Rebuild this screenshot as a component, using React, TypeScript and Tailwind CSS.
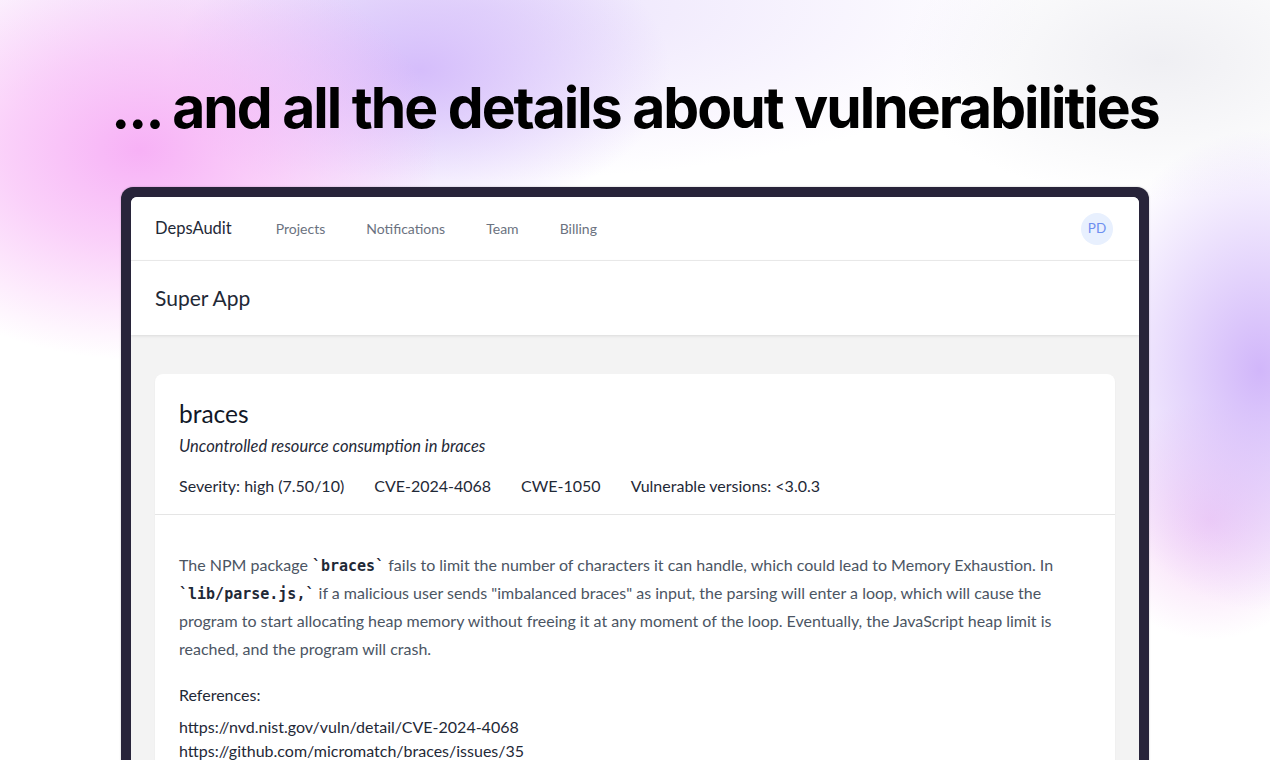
const SANS = { fontFamily: "Lato, 'Noto Sans', sans-serif" };
const MONO = { fontFamily: "'DejaVu Sans Mono', 'Liberation Mono', monospace" };

const NAV = ["Projects", "Notifications", "Team", "Billing"];

const META = [
	"Severity: high (7.50/10)",
	"CVE-2024-4068",
	"CWE-1050",
	"Vulnerable versions: <3.0.3",
];

const REFERENCES = [
	"https://nvd.nist.gov/vuln/detail/CVE-2024-4068",
	"https://github.com/micromatch/braces/issues/35",
];

function Code({ children }: { children: string }) {
	return (
		<code className="font-bold text-[15px] leading-none text-[#1f2937]" style={MONO}>
			{children}
		</code>
	);
}

export default function App() {
	return (
		<div className="flex h-[760px] w-full flex-col items-center overflow-hidden bg-white bg-[radial-gradient(ellipse_300px_210px_at_140px_150px,#f7b1f6_0%,rgba(247,177,246,0.6)_45%,rgba(255,255,255,0)_100%),radial-gradient(ellipse_250px_150px_at_420px_70px,#d5bdfb_0%,rgba(213,189,251,0.5)_50%,rgba(255,255,255,0)_100%),radial-gradient(ellipse_560px_170px_at_480px_10px,#ebe2fc_0%,rgba(235,226,252,0)_100%),radial-gradient(ellipse_180px_240px_at_1260px_370px,#d1b6fa_0%,rgba(209,182,250,0.5)_50%,rgba(255,255,255,0)_100%),radial-gradient(ellipse_120px_120px_at_1210px_520px,#f6d3f6_0%,rgba(246,211,246,0)_100%),radial-gradient(ellipse_260px_140px_at_1160px_60px,#efeff3_0%,rgba(239,239,243,0)_100%)]">
			<h1
				className="mt-[74px] text-[57px] font-bold leading-[68px] tracking-[-0.035em] text-black"
				style={{ fontFamily: "Inter, 'Noto Sans', sans-serif" }}
			>
				... and all the details about vulnerabilities
			</h1>

			<div className="mt-[45px] w-[1028px] flex-1 rounded-t-[12px] bg-[#28243a] px-[10px] pt-[10px] shadow-[0_0_2px_rgba(0,0,0,0.25)]">
				<div className="h-full overflow-hidden rounded-t-[6px] bg-[#f3f3f3]" style={SANS}>
					<nav className="flex h-[64px] items-center border-b border-[#ececec] bg-white px-6">
						<span className="text-[16.5px] text-[#1f2937]">DepsAudit</span>
						<div className="ml-[44px] flex gap-[41px]">
							{NAV.map((item) => (
								<span key={item} className="text-[14px] text-[#6b7280]">
									{item}
								</span>
							))}
						</div>
						<div className="ml-auto mr-[2px] flex h-8 w-8 items-center justify-center rounded-full bg-[#e8f0fe] text-[13.5px] text-[#6e8ff0]">
							PD
						</div>
					</nav>

					<header className="flex h-[74px] items-center bg-white px-6 shadow-[0_1px_3px_rgba(0,0,0,0.1)]">
						<h2 className="text-[21px] text-[#1f2937]">Super App</h2>
					</header>

					<main className="px-6 pt-[39px]">
						<section className="rounded-[8px] bg-white shadow-[0_1px_2px_rgba(0,0,0,0.05)]">
							<div className="border-b border-[#e5e5e5] px-6 pt-6 pb-4">
								<p className="text-[24.5px] leading-[32px] text-[#111827]">braces</p>
								<p className="mt-1 text-[16.5px] italic leading-[24px] text-[#1f2937]">
									Uncontrolled resource consumption in braces
								</p>
								<div className="mt-4 flex gap-[30px] text-[16px] leading-[24px] text-[#1f2937]">
									{META.map((item) => (
										<span key={item}>{item}</span>
									))}
								</div>
							</div>

							<div className="px-6 pt-[36px] pb-6">
								<p className="text-[16px] leading-[28px] text-[#4b5563]">
									The NPM package <Code>`braces`</Code> fails to limit the number of
									characters it can handle, which could lead to Memory Exhaustion. In{" "}
									<Code>`lib/parse.js,`</Code> if a malicious user sends "imbalanced
									braces" as input, the parsing will enter a loop, which will cause the
									program to start allocating heap memory without freeing it at any
									moment of the loop. Eventually, the JavaScript heap limit is reached,
									and the program will crash.
								</p>
								<p className="mt-5 text-[16px] leading-[24px] text-[#1f2937]">References:</p>
								<div className="mt-2 flex flex-col text-[16px] leading-[24px] text-[#1f2937]">
									{REFERENCES.map((link) => (
										<a key={link} href={link}>
											{link}
										</a>
									))}
								</div>
							</div>
						</section>
					</main>
				</div>
			</div>
		</div>
	);
}
